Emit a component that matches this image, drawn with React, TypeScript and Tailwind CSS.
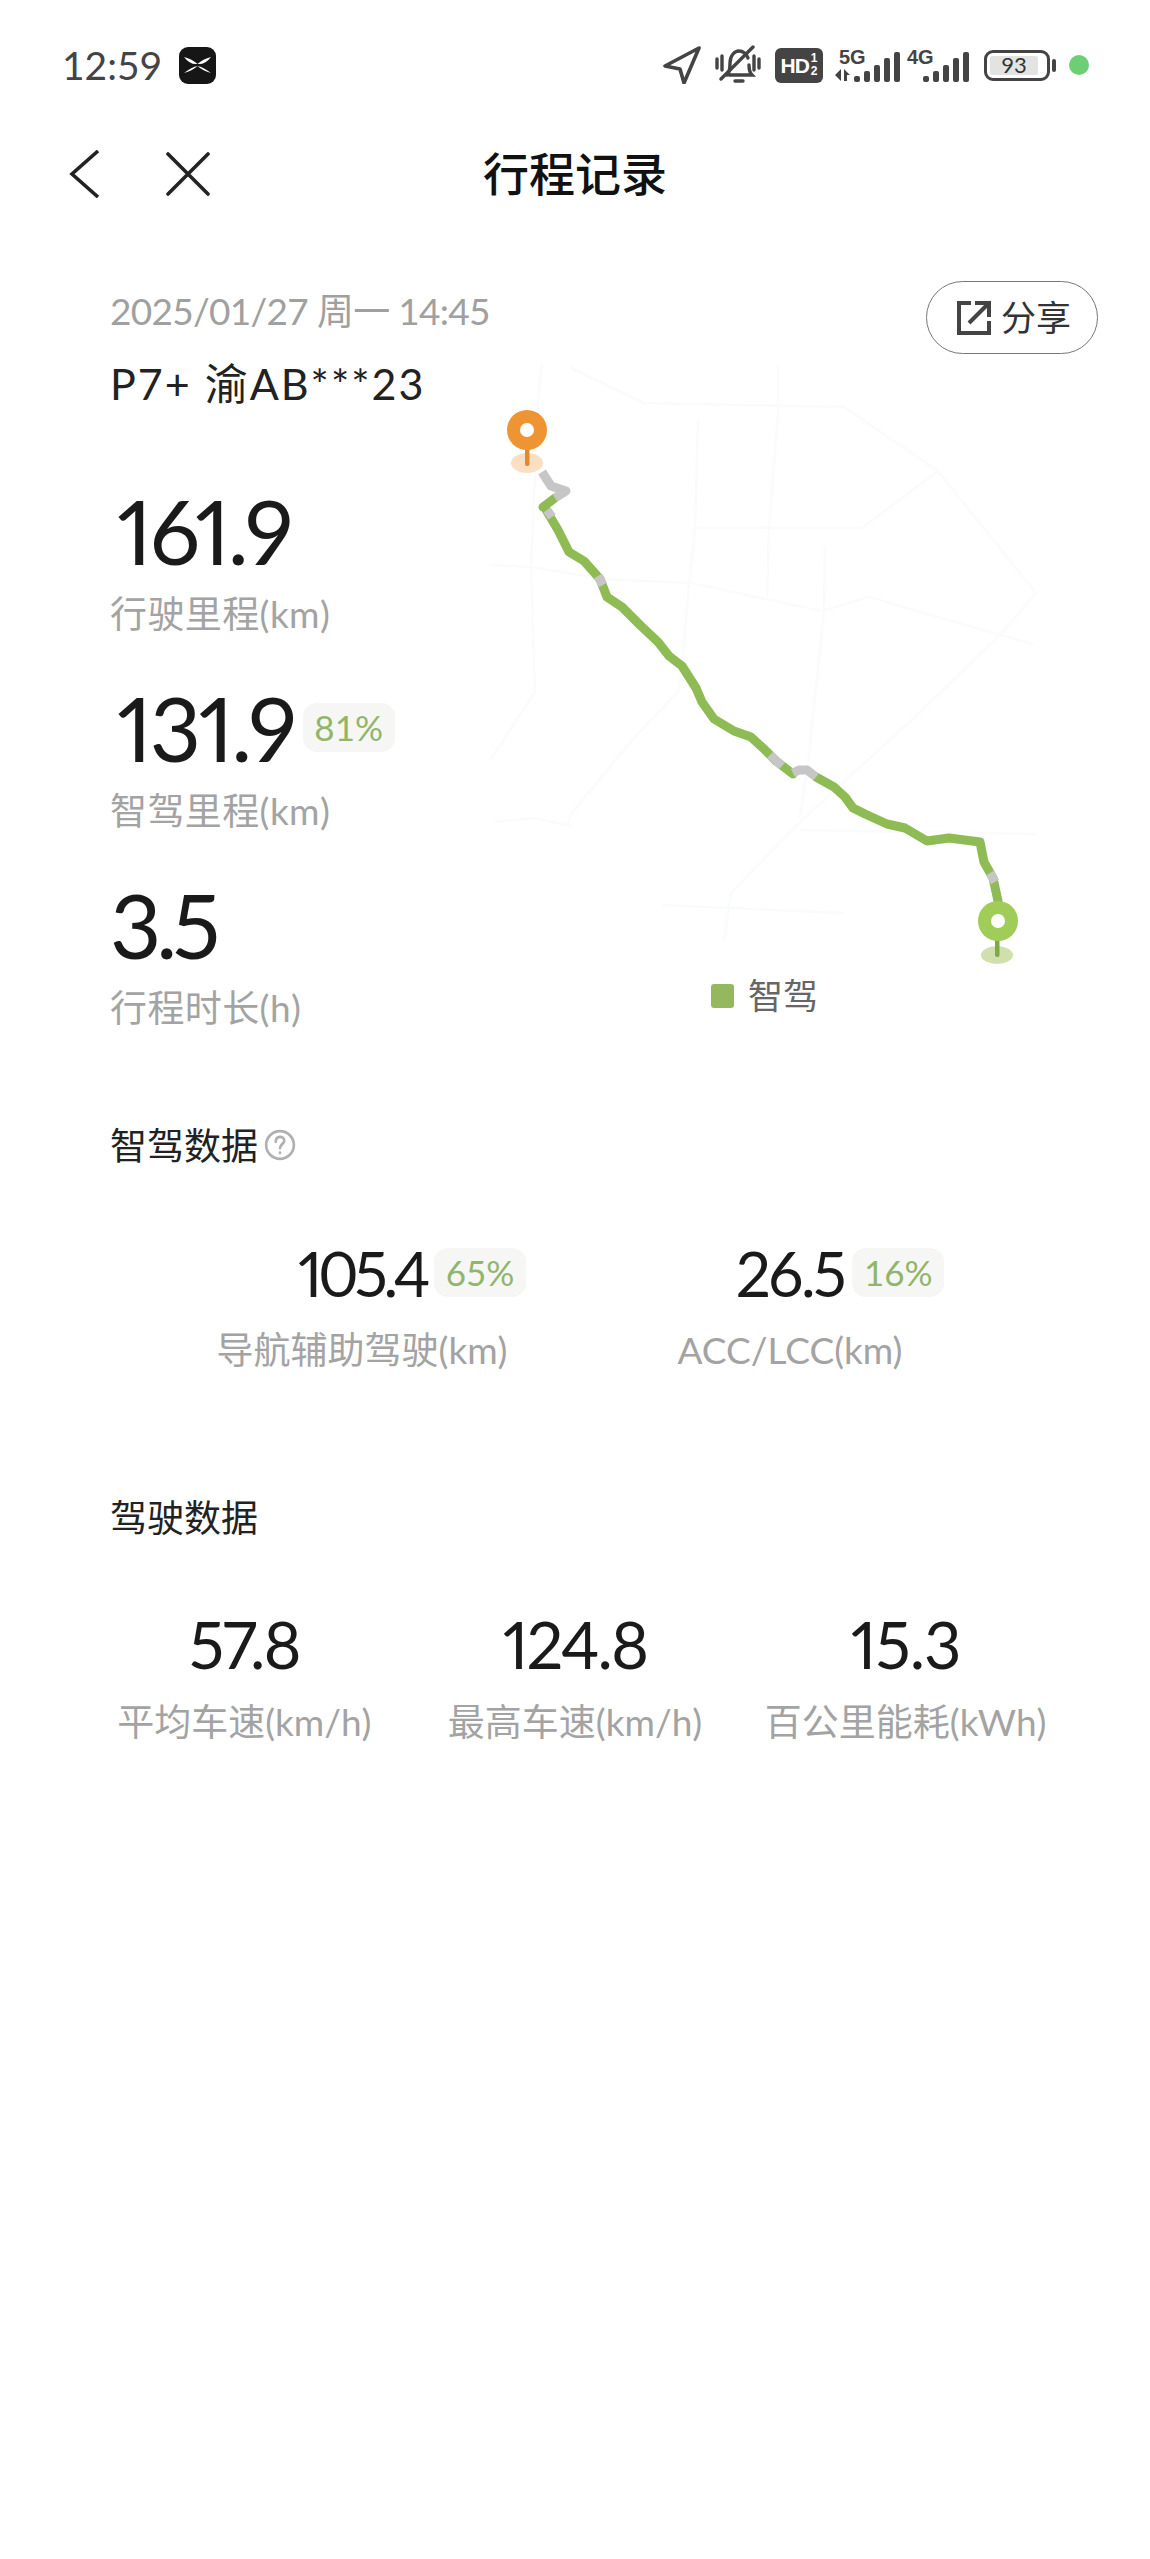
const ROAD_LINES = [
  "491,563 531,565 604,577 691,581 822,609 869,595 1000,633 1033,642",
  "698,417 695,528 689,583 682,662 678,690 633,737 571,812 567,824",
  "778,362 778,413 769,524 767,595",
  "542,362 538,401 531,565 535,690 491,757",
  "695,526 862,526 938,469",
  "825,544 824,609 809,753 800,816",
  "571,366 644,401 844,405 938,469 1036,591 1000,633 916,714 800,820 731,891 724,939",
  "800,828 1036,832",
  "495,820 535,816 571,824",
  "662,903 844,911",
];

const ROUTE =
  "543,505 555,496 M545,506 558,528 569,550 584,559 600,577 607,595 622,605 640,623 658,640 669,654 682,664 696,686 702,700 714,717 734,729 751,735 764,747 776,759 793,772 M816,775 834,785 845,795 853,806 865,812 887,822 905,826 927,839 949,836 980,840 984,860 993,876 998,899";
const GREY_SEGMENTS = [
  "542,470 551,484 566,489 555,496",
  "547,508 552,515",
  "598,574 603,583",
  "770,753 782,764",
  "793,771 799,768 807,768 816,775",
  "990,871 995,880",
];

function RouteMap() {
  return (
    <svg className="absolute left-[470px] top-[124px] h-[640px] w-[680px]" viewBox="470 340 680 640" fill="none">
      {ROAD_LINES.map((points) => (
        <polyline key={points} points={points} stroke="#fafbfb" strokeWidth="2.5" strokeLinejoin="round" />
      ))}
      <path d={`M${ROUTE}`} stroke="#8fbb54" strokeWidth="9" strokeLinecap="round" strokeLinejoin="round" />
      {GREY_SEGMENTS.map((points) => (
        <polyline key={points} points={points} stroke="#c6c6c6" strokeWidth="9" strokeLinejoin="round" />
      ))}
      <ellipse cx="527" cy="461" rx="16" ry="10" fill="#fadfc2" />
      <rect x="525" y="440" width="4.5" height="24" rx="2" fill="#df8a2f" />
      <circle cx="527" cy="428" r="20" fill="#ef9433" />
      <circle cx="527" cy="428" r="7" fill="#fff" />
      <ellipse cx="997" cy="953" rx="16" ry="9" fill="#cfe0ac" />
      <rect x="995" y="930" width="4.5" height="25" rx="2" fill="#7fa848" />
      <circle cx="998" cy="919" r="20" fill="#a0cc58" />
      <circle cx="998" cy="919" r="7" fill="#fff" />
    </svg>
  );
}

function SignalBars() {
  const heights = [6, 11, 17, 24, 30];
  return (
    <div className="flex items-end gap-[4px]">
      {heights.map((h) => (
        <svg key={h} width="6" height={h} viewBox={`0 0 6 ${h}`}>
          <rect width="6" height={h} rx="2" fill="#444" />
        </svg>
      ))}
    </div>
  );
}

function StatusBar() {
  return (
    <div className="flex h-[130px] items-center justify-between pl-[62px] pr-[61px]">
      <div className="flex items-center gap-[17px]">
        <span className="text-[39px] leading-none text-[#444]">12:59</span>
        <div className="flex h-[37px] w-[37px] items-center justify-center rounded-[9px] bg-[#161616]">
          <svg width="27" height="18" viewBox="0 0 27 18" fill="#fff">
            <path d="M0 1 Q8 3 13.5 8 Q6 9 0 1Z M27 1 Q19 3 13.5 8 Q21 9 27 1Z M0 17 Q8 11 13.5 10 Q8 15 0 17Z M27 17 Q19 11 13.5 10 Q19 15 27 17Z" />
          </svg>
        </div>
      </div>
      <div className="flex items-center">
        <svg width="38" height="38" viewBox="0 0 38 38" fill="none" stroke="#444" strokeWidth="3.6" strokeLinejoin="round">
          <path d="M36 2 2 20l15 3 4 14z" />
        </svg>
        <svg className="ml-[14px]" width="46" height="40" viewBox="0 0 46 40" fill="none" stroke="#444" strokeWidth="3.4" strokeLinecap="round">
          <path d="M12 30c3-3 3-7 3-12 0-8 5-12 9-12s8 3 9 7M34 20c0 5 1 8 3 10H14M20 36h8" />
          <path d="M38 2 6 34" />
          <path d="M2 14v9M7 11v14M39 11v14M44 14v9" />
        </svg>
        <div className="ml-[14px] flex h-[35px] w-[48px] items-center justify-center gap-[2px] rounded-[6px] bg-[#444] font-['Liberation_Sans',sans-serif] font-bold text-white">
          <span className="text-[21px] leading-none tracking-[-1px]">HD</span>
          <div className="flex flex-col items-center text-[12px] leading-[13px]">
            <span>1</span>
            <span>2</span>
          </div>
        </div>
        <div className="relative ml-[12px] flex h-[33px] w-[65px] items-end justify-end">
          <span className="absolute left-[4px] top-[-2px] font-['Liberation_Sans',sans-serif] text-[20px] font-bold leading-none text-[#444]">5G</span>
          <svg className="absolute bottom-[1px] left-0" width="15" height="12" viewBox="0 0 15 12" fill="#444">
            <path d="M6 0v12L0 6zM9 12V0l6 6h-3v6z" />
          </svg>
          <SignalBars />
        </div>
        <div className="relative ml-[7px] flex h-[33px] w-[62px] items-end justify-end">
          <span className="absolute left-0 top-[-2px] font-['Liberation_Sans',sans-serif] text-[20px] font-bold leading-none text-[#444]">4G</span>
          <SignalBars />
        </div>
        <div className="ml-[15px] flex h-[31px] w-[66px] items-center rounded-[9px] border-[3px] border-[#444] p-[3px]">
          <span className="flex h-full w-[48px] items-center justify-center rounded-[2px] bg-[#e3e3e3] text-[22px] leading-none text-[#333]">93</span>
        </div>
        <div className="ml-[2px] h-[13px] w-[4px] rounded-full bg-[#444]" />
        <div className="ml-[13px] h-[20px] w-[20px] rounded-full bg-[#6ccf76]" />
      </div>
    </div>
  );
}

function NavBar() {
  return (
    <div className="grid h-[88px] grid-cols-[1fr_auto_1fr] items-center pl-[68px]">
      <div className="flex items-center gap-[66px]">
        <svg width="32" height="48" viewBox="0 0 32 48" fill="none" stroke="#222" strokeWidth="3.6">
          <path d="M30 1 4 24l26 23" />
        </svg>
        <svg width="44" height="44" viewBox="0 0 44 44" fill="none" stroke="#222" strokeWidth="3.6" strokeLinecap="round">
          <path d="m2 2 40 40M42 2 2 42" />
        </svg>
      </div>
      <h1 className="mr-[68px] text-[46px] font-medium leading-none text-[#111]">行程记录</h1>
      <div />
    </div>
  );
}

function Badge({ children, className = "" }: { children: string; className?: string }) {
  return (
    <span className={`flex h-[49px] w-[92px] items-center justify-center rounded-[14px] bg-[#f6f7f5] text-[35px] leading-none text-[#91b56b] ${className}`}>
      {children}
    </span>
  );
}

function MainStat({ value, label, badge, valueClass }: { value: string; label: string; badge?: string; valueClass: string }) {
  return (
    <div className="h-[197px]">
      <div className="flex h-[64px] items-center">
        <span className={`text-[89px] leading-none text-[#1a1a1a] [font-variant-numeric:proportional-nums] ${valueClass}`}>{value}</span>
        {badge && <Badge className="ml-[8px]">{badge}</Badge>}
      </div>
      <p className="mt-[34px] text-[37px] leading-[36px] tracking-[0.4px] text-[#a3a3a3]">{label}</p>
    </div>
  );
}

function DetailStat({ value, label, badge, valueClass }: { value: string; label: string; badge?: string; valueClass: string }) {
  return (
    <div className="flex flex-col items-center">
      <div className="relative flex h-[49px] items-center">
        <span className={`leading-none text-[#1a1a1a] [font-variant-numeric:proportional-nums] ${valueClass}`}>{value}</span>
        {badge && <Badge className="absolute left-[calc(100%+8px)] top-0">{badge}</Badge>}
      </div>
      <p className="mt-[35px] whitespace-nowrap text-[37px] leading-[36px] text-[#a3a3a3]">{label}</p>
    </div>
  );
}

export default function App() {
  return (
    <div className="h-[2559px] w-[1150px] overflow-hidden bg-white font-['Lato','Noto_Sans_CJK_SC',sans-serif]">
      <StatusBar />
      <NavBar />

      <section className="relative h-[902px] pl-[110px] pr-[52px]">
        <RouteMap />
        <div className="relative flex items-start justify-between pt-[68px]">
          <div>
            <p className="text-[37px] leading-[50px] tracking-[-0.7px] text-[#a0a0a0]">2025/01/27 周一 14:45</p>
            <p className="mt-[23px] text-[43px] leading-[50px] tracking-[2px] text-[#222]">P7+ 渝AB***23</p>
          </div>
          <button className="-mt-[5px] flex h-[73px] w-[172px] items-center justify-center gap-[10px] rounded-full border-[1.5px] border-[#777] pl-[4px]">
            <svg width="34" height="34" viewBox="0 0 34 34" fill="none" stroke="#444" strokeWidth="4">
              <path d="M14 2H2v30h30V20M12 22 31 3M18 2h14v14" />
            </svg>
            <span className="text-[35px] leading-none text-[#333]">分享</span>
          </button>
        </div>
        <div className="relative mt-[89px]">
          <MainStat value="161.9" label="行驶里程(km)" valueClass="ml-[7px] tracking-[-2.5px]" />
          <MainStat value="131.9" label="智驾里程(km)" badge="81%" valueClass="ml-[7px] tracking-[-2.5px]" />
          <MainStat value="3.5" label="行程时长(h)" valueClass="tracking-[-5px]" />
        </div>
        <div className="absolute left-[711px] top-[760px] flex items-center gap-[14px]">
          <div className="h-[24px] w-[23px] rounded-[3px] bg-[#95b85f]" />
          <span className="text-[35px] leading-none text-[#666]">智驾</span>
        </div>
      </section>

      <section>
        <div className="flex h-[50px] items-center gap-[6px] pl-[110px]">
          <h2 className="text-[37px] leading-none text-[#222]">智驾数据</h2>
          <svg width="32" height="32" viewBox="0 0 30 30" fill="none" stroke="#b0b0b0" strokeWidth="2.5" strokeLinecap="round">
            <circle cx="15" cy="15" r="13" />
            <path d="M11 12c0-6 8-6 8-1 0 3-4 3-4 7M15 22v.5" />
          </svg>
        </div>
        <div className="mt-[78px] grid grid-cols-[428px_428px] pl-[148px]">
          <DetailStat value="105.4" label="导航辅助驾驶(km)" badge="65%" valueClass="text-[62px] tracking-[-4.5px]" />
          <DetailStat value="26.5" label="ACC/LCC(km)" badge="16%" valueClass="text-[62px] tracking-[-2.5px]" />
        </div>
      </section>

      <section className="mt-[124px]">
        <h2 className="flex h-[50px] items-center pl-[110px] text-[37px] leading-none text-[#222]">驾驶数据</h2>
        <div className="mt-[78px] grid grid-cols-3 px-[79px]">
          <DetailStat value="57.8" label="平均车速(km/h)" valueClass="text-[65px] tracking-[-2px]" />
          <DetailStat value="124.8" label="最高车速(km/h)" valueClass="text-[65px] tracking-[-2px]" />
          <DetailStat value="15.3" label="百公里能耗(kWh)" valueClass="text-[65px] tracking-[-1px]" />
        </div>
      </section>
    </div>
  );
}
